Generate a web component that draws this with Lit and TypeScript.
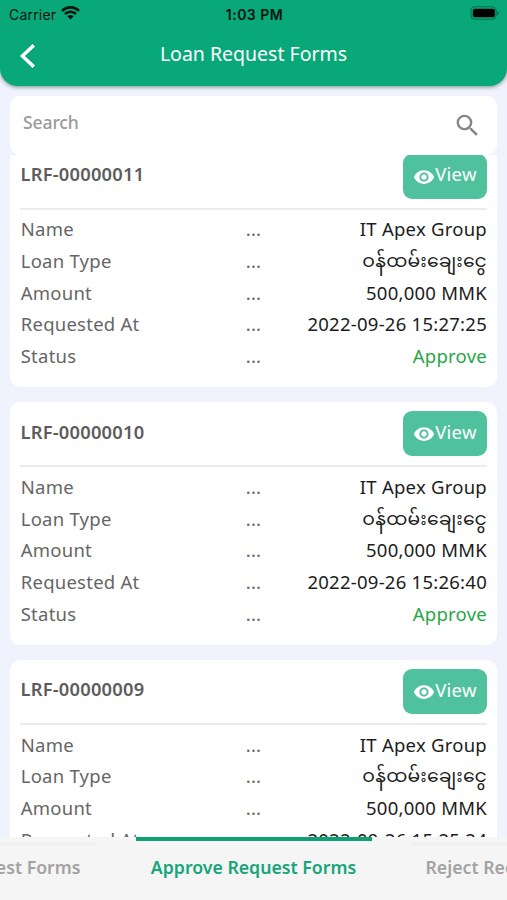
import { LitElement, html, css } from "lit";
import { customElement, property } from "lit/decorators.js";

interface LoanRequest {
  id: string;
  name: string;
  loanType: string;
  amount: string;
  requestedAt: string;
  status: string;
}

const make = (id: string, requestedAt: string): LoanRequest => ({
  id,
  name: "IT Apex Group",
  loanType: "ဝန်ထမ်းချေးငွေ",
  amount: "500,000 MMK",
  requestedAt,
  status: "Approve",
});

const REQUESTS: LoanRequest[] = [
  make("LRF-00000011", "2022-09-26 15:27:25"),
  make("LRF-00000010", "2022-09-26 15:26:40"),
  make("LRF-00000009", "2022-09-26 15:25:24"),
];

@customElement("status-bar")
class StatusBar extends LitElement {
  static styles = css`
    :host {
      display: grid;
      grid-template-columns: 1fr auto 1fr;
      align-items: center;
      height: 28px;
      padding: 0 7px 0 9px;
      color: #03140e;
      font-family: Inter, "Liberation Sans", sans-serif;
      font-size: 14px;
    }
    .left { display: flex; align-items: center; gap: 5px; letter-spacing: 0.2px; }
    .time { font-weight: 600; font-size: 14px; letter-spacing: 0.5px; }
    .right { display: flex; justify-content: flex-end; }
    svg { display: block; margin-bottom: 2px; }
  `;
  render() {
    return html`
      <div class="left">
        <span>Carrier</span>
        <svg width="19" height="14" viewBox="0 0 19 14">
          <path d="M1 4.9a12 12 0 0 1 17 0" fill="none" stroke="currentColor" stroke-width="2.7" />
          <path d="M4 8a7.8 7.8 0 0 1 11 0" fill="none" stroke="currentColor" stroke-width="2.5" />
          <path d="M6.4 10.3a4.6 4.6 0 0 1 6.2 0L9.5 13.5z" fill="currentColor" />
        </svg>
      </div>
      <div class="time">1:03 PM</div>
      <div class="right">
        <svg width="30" height="14" viewBox="0 0 30 14">
          <rect x="1" y="0.8" width="25" height="12.4" rx="3.6" fill="none" stroke="#03140e" stroke-opacity="0.4" stroke-width="1.1" />
          <rect x="2.8" y="2.7" width="22" height="8.6" rx="1.8" fill="#000" />
          <path d="M27.4 4.8c2 .8 2 3.6 0 4.4z" fill="#03140e" fill-opacity="0.45" />
        </svg>
      </div>
    `;
  }
}

@customElement("loan-card")
class LoanCard extends LitElement {
  @property({ attribute: false }) request!: LoanRequest;

  static styles = css`
    :host {
      display: block;
      box-sizing: border-box;
      height: 242.8px;
      padding: 9.3px 10px 0;
      background: #fff;
      border-radius: 10px;
    }
    .head {
      display: flex;
      justify-content: space-between;
      height: 54px;
      border-bottom: 2px solid #ececec;
    }
    .id {
      font-weight: 600;
      font-size: 18.3px;
      letter-spacing: 0.23px;
      line-height: 24px;
      margin: 8.3px 0 0 0.5px;
      color: #5c5c5c;
    }
    .view {
      display: flex;
      align-items: center;
      justify-content: center;
      box-sizing: border-box;
      width: 84px;
      height: 45px;
      border: 0;
      padding: 0;
      border-radius: 9px;
      background: #50c19d;
      color: #fff;
      font: inherit;
      letter-spacing: inherit;
      line-height: 24px;
    }
    .view svg { margin-top: 1px; }
    .view span { margin-bottom: 4px; }
    .row {
      display: grid;
      grid-template-columns: 1fr 16px 1fr;
      height: 31.75px;
      line-height: 31.75px;
      white-space: nowrap;
      color: #666;
    }
    .label { padding-left: 0.7px; }
    .rows { padding-top: 3.5px; }
    .dots { text-align: center; }
    .value { text-align: right; color: #1c1c1c; justify-self: end; }
    .script { font-size: 18.8px; }
    .approve { color: #28a745; }
  `;

  private row(label: string, value: string, cls = "") {
    return html`<div class="row">
      <span class="label">${label}</span><span class="dots">...</span><span class="value ${cls}">${value}</span>
    </div>`;
  }

  render() {
    const r = this.request;
    return html`
      <div class="head">
        <div class="id">${r.id}</div>
        <button class="view">
          <svg width="22" height="22" viewBox="0 0 24 24" fill="#fff">
            <path d="M12 4.5C7 4.5 2.73 7.61 1 12c1.73 4.39 6 7.5 11 7.5s9.27-3.11 11-7.5c-1.73-4.39-6-7.5-11-7.5zM12 17c-2.76 0-5-2.24-5-5s2.24-5 5-5 5 2.24 5 5-2.24 5-5 5zm0-8c-1.66 0-3 1.34-3 3s1.34 3 3 3 3-1.34 3-3-1.34-3-3-3z" />
          </svg>
          <span>View</span>
        </button>
      </div>
      <div class="rows">
        ${this.row("Name", r.name)} ${this.row("Loan Type", r.loanType, "script")}
        ${this.row("Amount", r.amount)} ${this.row("Requested At", r.requestedAt)}
        ${this.row("Status", r.status, "approve")}
      </div>
    `;
  }
}

@customElement("app-root")
class AppRoot extends LitElement {
  static styles = css`
    :host {
      display: flex;
      flex-direction: column;
      width: 507px;
      height: 900px;
      overflow: hidden;
      background: #f0f2fe;
      font-family: "Noto Sans", "Noto Sans Myanmar", sans-serif;
      font-size: 18.5px;
      letter-spacing: 0.25px;
    }
    header {
      flex: none;
      height: 86px;
      background: #08a879;
      border-radius: 0 0 18px 18px;
      box-shadow: 0 1px 4px rgba(0, 60, 40, 0.55);
      z-index: 2;
    }
    .bar {
      display: grid;
      grid-template-columns: 40px 1fr 40px;
      align-items: center;
      height: 52px;
      color: #fff;
    }
    .back { display: block; margin: 4px 0 0 18px; }
    h1 {
      margin: 0;
      text-align: center;
      font-weight: 400;
      font-size: 19.5px;
      line-height: 52px;
      letter-spacing: 0;
    }
    .search {
      flex: none;
      display: flex;
      justify-content: space-between;
      align-items: center;
      box-sizing: border-box;
      height: 59px;
      margin: 10px 10px 0;
      padding: 0 15px 0 13px;
      background: #fff;
      border-radius: 10px;
      color: #9a9a9a;
      font-weight: 500;
      font-size: 17.6px;
      letter-spacing: -0.15px;
      z-index: 1;
    }
    .search span { margin-bottom: 7px; }
    main {
      flex: 1;
      min-height: 0;
      overflow: hidden;
      padding: 0 10px;
    }
    .list {
      display: flex;
      flex-direction: column;
      gap: 15px;
      margin-top: -10.8px;
    }
    nav {
      flex: none;
      display: grid;
      grid-template-columns: 1fr 236px 1fr;
      gap: 40px;
      height: 63px;
      background: #f5f5f5;
      font-weight: 600;
      font-size: 17.7px;
      letter-spacing: 0;
      white-space: nowrap;
    }
    .tab {
      min-width: 0;
      display: flex;
      box-sizing: border-box;
      padding: 0 14px;
      line-height: 42px;
      color: #a3a3a3;
      border-top: 4px solid #f0f0f0;
      margin-top: 5px;
    }
    .prev { justify-content: flex-end; padding-right: 15px; }
    .on {
      justify-content: center;
      line-height: 52px;
      margin-top: 0;
      color: #16a679;
      border-top-color: #0fa174;
    }
  `;

  render() {
    return html`
      <header>
        <status-bar></status-bar>
        <div class="bar">
          <svg class="back" width="18" height="26" viewBox="0 0 18 26">
            <path d="M15.8 2.2 4.4 13l11.4 10.8" fill="none" stroke="#fff" stroke-width="3.5" />
          </svg>
          <h1>Loan Request Forms</h1>
        </div>
      </header>
      <div class="search">
        <span>Search</span>
        <svg width="29" height="29" viewBox="0 0 24 24" fill="#868686">
          <path d="M15.5 14h-.79l-.28-.27A6.47 6.47 0 0 0 16 9.5 6.5 6.5 0 1 0 9.5 16c1.61 0 3.09-.59 4.23-1.57l.27.28v.79l5 4.99L20.49 19l-4.99-5zm-6 0C7.01 14 5 11.99 5 9.5S7.01 5 9.5 5 14 7.01 14 9.5 11.99 14 9.5 14z" />
        </svg>
      </div>
      <main>
        <div class="list">${REQUESTS.map((r) => html`<loan-card .request=${r}></loan-card>`)}</div>
      </main>
      <nav>
        <div class="tab prev">Pending Request Forms</div>
        <div class="tab on">Approve Request Forms</div>
        <div class="tab">Reject Request Forms</div>
      </nav>
    `;
  }
}
